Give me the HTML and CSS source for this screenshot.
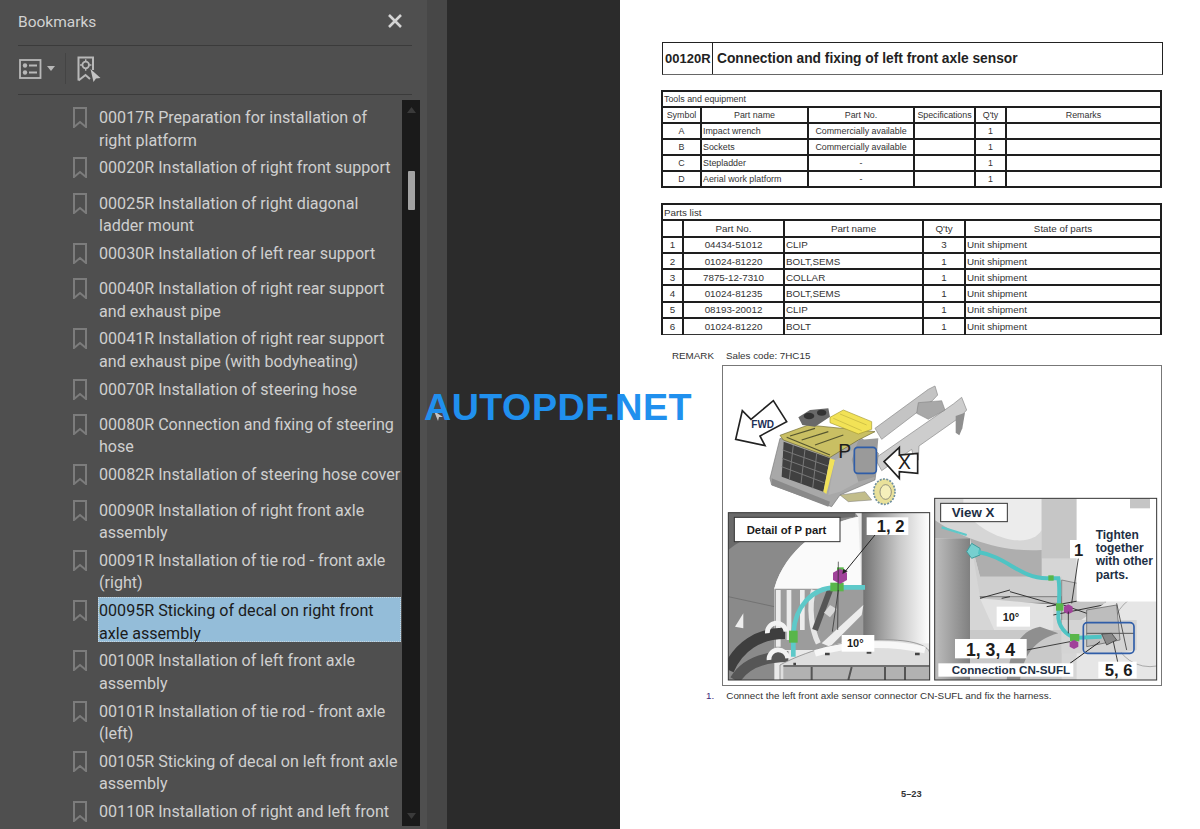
FILE: index.html
```html
<!DOCTYPE html>
<html lang="en">
<head>
<meta charset="utf-8">
<title>Bookmarks</title>
<link rel="stylesheet" href="styles.css">
</head>
<body>
<div class="app">
  <aside class="sidebar">
    <header class="side-head">
      <span class="side-title">Bookmarks</span>
      <svg class="close" width="16" height="16" viewBox="0 0 16 16"><path d="M2 2 14 14M14 2 2 14" stroke="#d4d4d4" stroke-width="2.6" fill="none"/></svg>
    </header>
    <div class="side-tools">
      <svg width="23" height="20" viewBox="0 0 23 20" fill="none" stroke="#b8b8b8">
        <rect x="1" y="1" width="20.500" height="18" stroke-width="1.800"/>
        <path d="M10 6.500h8M10 13.500h8" stroke-width="2.200"/>
        <circle cx="6" cy="6.500" r="2.200" fill="#b8b8b8" stroke="none"/>
        <circle cx="6" cy="13.500" r="2.200" fill="#b8b8b8" stroke="none"/>
      </svg>
      <svg class="caret" width="8" height="5" viewBox="0 0 8 5"><path d="M0 0h8L4 5z" fill="#b8b8b8"/></svg>
      <span class="tool-sep"></span>
      <svg width="24" height="26" viewBox="0 0 24 26" fill="none" stroke="#b8b8b8">
        <path d="M1.500 24.500V1.500h14.500V14M1.500 24.500l7-5.500 4.500 4" stroke-width="2"/>
        <circle cx="8.700" cy="9" r="3.300" stroke-width="1.800"/>
        <path d="M8.700 3.300v2M8.700 12.700v2M3 9h2M12.400 9h2" stroke-width="1.400"/>
        <path d="M13.500 13 23.500 22l-4.500 .500L16.500 26z" fill="#c4c4c4" stroke="none"/>
      </svg>
    </div>
    <div class="side-body">
      <ul class="tree">
        <li class="item"><svg class="mark" viewBox="0 0 14 21"><path d="M1 1h12v19l-6-5-6 5z"/></svg><span class="label">00017R Preparation for installation of right platform</span></li>
        <li class="item"><svg class="mark" viewBox="0 0 14 21"><path d="M1 1h12v19l-6-5-6 5z"/></svg><span class="label">00020R Installation of right front support</span></li>
        <li class="item"><svg class="mark" viewBox="0 0 14 21"><path d="M1 1h12v19l-6-5-6 5z"/></svg><span class="label">00025R Installation of right diagonal ladder mount</span></li>
        <li class="item"><svg class="mark" viewBox="0 0 14 21"><path d="M1 1h12v19l-6-5-6 5z"/></svg><span class="label">00030R Installation of left rear support</span></li>
        <li class="item"><svg class="mark" viewBox="0 0 14 21"><path d="M1 1h12v19l-6-5-6 5z"/></svg><span class="label">00040R Installation of right rear support and exhaust pipe</span></li>
        <li class="item"><svg class="mark" viewBox="0 0 14 21"><path d="M1 1h12v19l-6-5-6 5z"/></svg><span class="label">00041R Installation of right rear support and exhaust pipe (with bodyheating)</span></li>
        <li class="item"><svg class="mark" viewBox="0 0 14 21"><path d="M1 1h12v19l-6-5-6 5z"/></svg><span class="label">00070R Installation of steering hose</span></li>
        <li class="item"><svg class="mark" viewBox="0 0 14 21"><path d="M1 1h12v19l-6-5-6 5z"/></svg><span class="label">00080R Connection and fixing of steering hose</span></li>
        <li class="item"><svg class="mark" viewBox="0 0 14 21"><path d="M1 1h12v19l-6-5-6 5z"/></svg><span class="label">00082R Installation of steering hose cover</span></li>
        <li class="item"><svg class="mark" viewBox="0 0 14 21"><path d="M1 1h12v19l-6-5-6 5z"/></svg><span class="label">00090R Installation of right front axle assembly</span></li>
        <li class="item"><svg class="mark" viewBox="0 0 14 21"><path d="M1 1h12v19l-6-5-6 5z"/></svg><span class="label">00091R Installation of tie rod - front axle (right)</span></li>
        <li class="item"><svg class="mark" viewBox="0 0 14 21"><path d="M1 1h12v19l-6-5-6 5z"/></svg><span class="label selected">00095R Sticking of decal on right front axle assembly</span></li>
        <li class="item"><svg class="mark" viewBox="0 0 14 21"><path d="M1 1h12v19l-6-5-6 5z"/></svg><span class="label">00100R Installation of left front axle assembly</span></li>
        <li class="item"><svg class="mark" viewBox="0 0 14 21"><path d="M1 1h12v19l-6-5-6 5z"/></svg><span class="label">00101R Installation of tie rod - front axle (left)</span></li>
        <li class="item"><svg class="mark" viewBox="0 0 14 21"><path d="M1 1h12v19l-6-5-6 5z"/></svg><span class="label">00105R Sticking of decal on left front axle assembly</span></li>
        <li class="item"><svg class="mark" viewBox="0 0 14 21"><path d="M1 1h12v19l-6-5-6 5z"/></svg><span class="label">00110R Installation of right and left front</span></li>
      </ul>
      <div class="scrollbar">
        <svg class="arrow" width="9" height="6" viewBox="0 0 9 6"><path d="M0 6h9L4.500 0z" fill="#3a3a3a"/></svg>
        <span class="thumb"></span>
        <svg class="arrow arrow-end" width="9" height="6" viewBox="0 0 9 6"><path d="M0 0h9L4.500 6z" fill="#3a3a3a"/></svg>
      </div>
    </div>
  </aside>
  <div class="gutter"></div>
  <div class="backdrop"></div>
  <main class="page">
    <div class="title-box">
      <span class="title-code">00120R</span>
      <span class="title-text">Connection and fixing of left front axle sensor</span>
    </div>

    <table class="sheet tools">
      <colgroup><col class="t1"><col class="t2"><col class="t3"><col class="t4"><col class="t5"><col></colgroup>
      <tr><td colspan="6" class="l">Tools and equipment</td></tr>
      <tr><td>Symbol</td><td>Part name</td><td>Part No.</td><td class="tight">Specifications</td><td>Q'ty</td><td>Remarks</td></tr>
      <tr><td>A</td><td class="l">Impact wrench</td><td>Commercially available</td><td></td><td>1</td><td></td></tr>
      <tr><td>B</td><td class="l">Sockets</td><td>Commercially available</td><td></td><td>1</td><td></td></tr>
      <tr><td>C</td><td class="l">Stepladder</td><td>-</td><td></td><td>1</td><td></td></tr>
      <tr><td>D</td><td class="l">Aerial work platform</td><td>-</td><td></td><td>1</td><td></td></tr>
    </table>

    <table class="sheet parts">
      <colgroup><col class="p1"><col class="p2"><col class="p3"><col class="p4"><col></colgroup>
      <tr><td colspan="5" class="l">Parts list</td></tr>
      <tr><td></td><td>Part No.</td><td>Part name</td><td>Q'ty</td><td>State of parts</td></tr>
      <tr><td>1</td><td>04434-51012</td><td class="l">CLIP</td><td>3</td><td class="l">Unit shipment</td></tr>
      <tr><td>2</td><td>01024-81220</td><td class="l">BOLT,SEMS</td><td>1</td><td class="l">Unit shipment</td></tr>
      <tr><td>3</td><td>7875-12-7310</td><td class="l">COLLAR</td><td>1</td><td class="l">Unit shipment</td></tr>
      <tr><td>4</td><td>01024-81235</td><td class="l">BOLT,SEMS</td><td>1</td><td class="l">Unit shipment</td></tr>
      <tr><td>5</td><td>08193-20012</td><td class="l">CLIP</td><td>1</td><td class="l">Unit shipment</td></tr>
      <tr><td>6</td><td>01024-81220</td><td class="l">BOLT</td><td>1</td><td class="l">Unit shipment</td></tr>
    </table>

    <p class="remark"><span>REMARK</span><span>Sales code: 7HC15</span></p>

    <figure class="figure">
      <svg class="art" viewBox="722 365 440 321" width="440" height="321">
        <defs>
          <linearGradient id="col" x1="0" x2="1" y1="0" y2="0"><stop offset="0" stop-color="#6f6f6f"/><stop offset=".55" stop-color="#c9c9c9"/><stop offset="1" stop-color="#fff"/></linearGradient>
          <linearGradient id="col2" x1="0" x2="1" y1="0" y2="0"><stop offset="0" stop-color="#bdbdbd"/><stop offset="1" stop-color="#808080"/></linearGradient>
          <clipPath id="clipP"><rect x="40" y="68" width="604" height="502"/></clipPath>
          <clipPath id="clipX"><rect x="14" y="25" width="666" height="545"/></clipPath>
        </defs>

        <!-- machine overview -->
        <g transform="translate(715 360) scale(.33333)">
          <path d="M480 205 640 88 660 78 668 105 652 122 500 238z" fill="#c4c4c4" stroke="#8a8a8a" stroke-width="2"/>
          <path d="M480 295 715 132 740 112 755 150 735 172 720 182 612 258 610 300 598 300 590 268 500 332z" fill="#cdcdcd" stroke="#8a8a8a" stroke-width="2"/>
          <path d="M610 128 680 122 690 150 640 178 605 160z" fill="#a8a8a8" stroke="#777" stroke-width="1.500"/>
          <path d="M722 168 750 158 742 205 733 226 722 218z" fill="#8f8f8f"/>
          <path d="M195 235 165 355 170 375 350 440 375 405 480 360 490 280 440 235 360 270z" fill="#a8a8a8" stroke="#7a7a7a" stroke-width="2"/>
          <path d="M170 355 345 425 340 440 170 375z" fill="#8a8a8a"/>
          <path d="M206 245 345 295 325 395 200 350z" fill="#404040"/>
          <path d="M203 270 338 318M201 295 333 343M200 320 328 368M235 255 223 358M270 268 258 371M305 282 293 385" stroke="#777" stroke-width="3" fill="none"/>
          <path d="M345 295 360 300 334 402 325 395z" fill="#f1e25a"/>
          <path d="M360 300 430 260 480 290 470 345 375 395 340 405z" fill="#b2b2b2"/>
          <path d="M195 226 280 195 480 215 430 240 345 292 205 240z" fill="#c9bf63" stroke="#6f6a30" stroke-width="2"/>
          <path d="M225 228 300 205M260 240 340 215M300 255 385 225M215 232 345 285" stroke="#55552f" stroke-width="3.500" fill="none"/>
          <path d="M345 172 385 150 470 185 470 208 430 222 345 188z" fill="#f2e256" stroke="#a69a34" stroke-width="2"/>
          <path d="M355 175 440 212M375 162 455 195" stroke="#bfb240" stroke-width="2" fill="none"/>
          <path d="M250 172 285 150 340 145 345 170 300 200 262 195z" fill="#696969"/>
          <ellipse cx="282" cy="168" rx="16" ry="10" fill="#333"/>
          <ellipse cx="320" cy="158" rx="14" ry="9" fill="#333"/>
          <path d="M430 240 490 235 480 350 430 365 410 300z" fill="#9a9a9a"/>
          <path d="M375 405 450 395 470 420 400 425z" fill="#c2bd8b" stroke="#777" stroke-width="1.500"/>
          <ellipse cx="508" cy="395" rx="32" ry="38" fill="#e9e19a" stroke="#6f8f9f" stroke-width="5" stroke-dasharray="6 4"/>
          <ellipse cx="512" cy="396" rx="17" ry="22" fill="#f5efba" stroke="#666" stroke-width="2"/>
          <path d="M175 122 215 185 135 228 150 257 62 238 82 152 108 178z" fill="#fff" stroke="#222" stroke-width="5"/>
          <text x="143" y="204" class="t-fwd" text-anchor="middle">FWD</text>
          <text x="370" y="295" class="t-p">P</text>
          <rect x="418" y="262" width="66" height="78" rx="10" fill="none" stroke="#2f5da8" stroke-width="5"/>
          <path d="M507 305 553 262 553 285 608 280 608 340 553 335 553 355z" fill="#fff" stroke="#222" stroke-width="5"/>
          <text x="568" y="328" class="t-x" text-anchor="middle">X</text>
        </g>

        <!-- Detail of P part -->
        <g transform="translate(715 490) scale(.33333)">
          <g clip-path="url(#clipP)">
            <rect x="40" y="68" width="604" height="502" fill="#e9e9e9"/>
            <path d="M40 68H420L430 80C320 100 210 180 178 295V570H40z" fill="#8a8a8a"/>
            <path d="M40 68H420V80C300 90 120 110 40 180z" fill="#6a6a6a"/>
            <path d="M40 320 178 350" stroke="#666" stroke-width="2" fill="none"/>
            <path d="M60 410 85 370 85 415z" fill="#eee"/>
            <path d="M178 295C210 180 320 100 430 80L445 440H178z" fill="#fafafa"/>
            <rect x="440" y="68" width="204" height="392" fill="url(#col)"/>
            <path d="M178 296H445V440L300 480H178z" fill="#9c9c9c"/>
            <path d="M190 300V470M222 300V450M262 300V420" stroke="#ececec" stroke-width="14" fill="none"/>
            <path d="M296 300C280 350 290 420 310 460" stroke="#e6e6e6" stroke-width="16" fill="none"/>
            <path d="M320 460 445 345 440 375 345 470z" fill="#ededed"/>
            <path d="M345 300 300 420" stroke="#555" stroke-width="18" fill="none"/>
            <path d="M345 345 365 357 345 382 327 368z" fill="#d8d8d8"/>
            <path d="M40 540C70 470 130 430 210 430" stroke="#3e3e3e" stroke-width="34" fill="none"/>
            <path d="M60 570C90 520 150 500 220 500" stroke="#565656" stroke-width="32" fill="none"/>
            <path d="M157 430A28 28 0 0 1 213 425" stroke="#f3f3f3" stroke-width="14" fill="none"/>
            <path d="M162 510A28 28 0 0 1 218 505" stroke="#f3f3f3" stroke-width="14" fill="none"/>
            <path d="M195 525C260 490 380 445 520 450 600 450 644 470 644 490V570H195z" fill="#dedede" stroke="#777" stroke-width="2"/>
            <path d="M300 490C400 460 520 455 630 480" stroke="#f7f7f7" stroke-width="20" fill="none"/>
            <path d="M205 528H644" stroke="#4c4c4c" stroke-width="4" fill="none"/>
            <path d="M205 531H644V570H205z" fill="#b2b2b2"/>
            <path d="M235 522h8M330 492h14M455 488h14M600 492h14" stroke="#444" stroke-width="7" fill="none"/>
            <path d="M290 531v39M410 531 400 570M510 531v39M570 531v39" stroke="#555" stroke-width="6" fill="none"/>
            <path d="M235 500V430C240 350 290 295 360 292H450" stroke="#5ec9c9" stroke-width="14" fill="none"/>
            <rect x="222" y="422" width="26" height="36" fill="#59b64a"/>
            <rect x="346" y="278" width="40" height="26" fill="#59b64a"/>
            <rect x="366" y="232" width="20" height="14" fill="#59b64a"/>
            <path d="M375 236 396 248V270L375 282 354 270V248z" fill="#a0429a"/>
            <path d="M370 215 368 420" stroke="#222" stroke-width="2" fill="none"/>
            <path d="M370 300 352 425" stroke="#222" stroke-width="2" fill="none"/>
            <path d="M480 135 390 245" stroke="#222" stroke-width="3" fill="none"/>
            <path d="M382 252 385 236 398 244z" fill="#222"/>
          </g>
          <rect x="40" y="68" width="604" height="502" fill="none" stroke="#333" stroke-width="3"/>
          <rect x="58" y="82" width="317" height="73" fill="#fff" stroke="#333" stroke-width="3"/>
          <text x="95" y="133" class="t-label">Detail of P part</text>
          <rect x="455" y="82" width="125" height="53" fill="#fff"/>
          <text x="485" y="127" class="t-big">1, 2</text>
          <rect x="380" y="435" width="98" height="50" fill="#fff"/>
          <text x="396" y="472" class="t-deg">10°</text>
        </g>

        <!-- View X -->
        <g transform="translate(930 490) scale(.33333)">
          <g clip-path="url(#clipX)">
            <rect x="14" y="25" width="666" height="545" fill="#d6d6d6"/>
            <path d="M100 25H335V120C300 180 170 150 100 60z" fill="#ececec"/>
            <rect x="335" y="25" width="105" height="180" fill="#c6c6c6"/>
            <path d="M14 90C70 130 200 190 335 180V260H150L120 145H14z" fill="#aeaeae"/>
            <rect x="14" y="145" width="106" height="425" fill="url(#col2)"/>
            <path d="M35 112 110 135" stroke="#5ec9c9" stroke-width="7" fill="none"/>
            <path d="M120 145 150 320H395V260H150z" fill="#cfcfcf"/>
            <path d="M150 320H395V340H170z" fill="#c4c4c4" stroke="#555" stroke-width="2"/>
            <path d="M150 325 195 425H370V345z" fill="#e2e2e2"/>
            <path d="M120 420H395V570H120z" fill="#c9c9c9"/>
            <path d="M330 410C270 420 240 480 230 570H270C280 500 310 450 385 430z" fill="#8f8f8f"/>
            <path d="M395 270 490 290 530 340V400H395z" fill="#c4c4c4" stroke="#666" stroke-width="2"/>
            <path d="M350 350 460 330M370 375 520 345M400 345 540 395" stroke="#333" stroke-width="3" fill="none"/>
            <path d="M530 335H680V570H440V400z" fill="#e6e6e6"/>
            <circle cx="660" cy="420" r="110" fill="none" stroke="#aaa" stroke-width="3"/>
            <path d="M395 390H620V480L560 490H395z" fill="#d4d4d4"/>
            <path d="M470 360 560 345 570 450 470 470z" fill="#bdbdbd" stroke="#555" stroke-width="2"/>
            <path d="M470 430H612M560 340 590 480" stroke="#555" stroke-width="3" fill="none"/>
            <path d="M240 320 215 325M240 300 150 325M240 305 380 345" stroke="#333" stroke-width="3" fill="none"/>
            <rect x="440" y="25" width="240" height="310" fill="#fff"/>
            <rect x="600" y="25" width="60" height="30" fill="#c5c5c5"/>
            <path d="M125 160 110 185 125 205 150 195 150 175z" fill="#76cfcf" stroke="#3f9b9b" stroke-width="3"/>
            <path d="M145 186C230 200 270 265 350 265H385C392 300 385 350 385 385 390 420 420 445 445 443L515 440" stroke="#4fc4c4" stroke-width="12" fill="none"/>
            <rect x="355" y="256" width="16" height="16" fill="#59b64a"/>
            <rect x="378" y="340" width="22" height="22" fill="#59b64a"/>
            <rect x="420" y="432" width="28" height="22" fill="#59b64a"/>
            <path d="M415 343 428 350V366L415 373 402 366V350z" fill="#a0429a"/>
            <path d="M432 450 445 457V470L432 477 419 470V457z" fill="#a0429a"/>
            <path d="M515 432 545 430 560 450 530 465z" fill="#888" stroke="#333" stroke-width="2"/>
            <path d="M445 205 425 340M415 365V430" stroke="#222" stroke-width="2.500" fill="none"/>
            <path d="M290 480 420 455" stroke="#222" stroke-width="2.500" fill="none"/>
            <path d="M420 520 510 455" stroke="#222" stroke-width="3" fill="none"/>
            <path d="M565 525 550 455" stroke="#222" stroke-width="2.500" fill="none"/>
            <rect x="460" y="398" width="152" height="92" rx="12" fill="none" stroke="#2f5da8" stroke-width="5"/>
          </g>
          <rect x="14" y="25" width="666" height="545" fill="none" stroke="#333" stroke-width="3"/>
          <rect x="32" y="40" width="200" height="55" fill="#fff" stroke="#333" stroke-width="3"/>
          <text x="65" y="82" class="t-view">View X</text>
          <text class="t-note"><tspan x="497" y="146">Tighten</tspan><tspan x="497" y="186">together</tspan><tspan x="497" y="226">with other</tspan><tspan x="497" y="267">parts.</tspan></text>
          <rect x="420" y="150" width="50" height="55" fill="#fff"/>
          <text x="432" y="197" class="t-big">1</text>
          <rect x="200" y="350" width="100" height="60" fill="#fff"/>
          <text x="218" y="392" class="t-deg">10°</text>
          <rect x="75" y="447" width="215" height="58" fill="#fff"/>
          <text x="108" y="497" class="t-big wide">1, 3, 4</text>
          <rect x="25" y="520" width="405" height="40" fill="#fff"/>
          <text x="65" y="551" class="t-conn">Connection CN-SUFL</text>
          <rect x="505" y="515" width="115" height="50" fill="#fff"/>
          <text x="524" y="559" class="t-big">5, 6</text>
        </g>
      </svg>
    </figure>

    <p class="caption"><span class="cap-num">1.</span><span>Connect the left front axle sensor connector CN-SUFL and fix the harness.</span></p>
    <p class="folio">5–23</p>
  </main>
  <svg class="pointer" width="9" height="10" viewBox="0 0 9 10"><path d="M0 0 9 6 5 6 4 10z" fill="#c4c4c4"/></svg>
  <div class="watermark">AUTOPDF.NET</div>
</div>
</body>
</html>
```
FILE: styles.css
```css
* { box-sizing: border-box; }
html, body { margin: 0; height: 100%; overflow: hidden; }
body { font-family: Roboto, "Open Sans", sans-serif; background: #2b2b2b; }
.app { position: relative; display: flex; height: 829px; width: 1200px; overflow: hidden; }

/* sidebar */
.sidebar { width: 427px; flex: none; background: #4f4f4f; padding: 0 15px 0 18px; display: flex; flex-direction: column; }
.side-head { height: 46px; display: flex; align-items: center; justify-content: space-between; padding: 0 9px 3px 0; border-bottom: 1px solid #3b3b3b; }
.side-title { font-size: 15.500px; color: #d2d2d2; padding-top: 2px; }
.side-tools { height: 49px; display: flex; align-items: center; border-bottom: 1px solid #3b3b3b; padding: 0 0 3px 1px; }
.caret { margin-left: 5px; }
.tool-sep { width: 1px; height: 31px; background: #444; margin: 0 11px 0 10px; }
.side-body { flex: 1; min-height: 0; display: flex; padding-top: 5px; margin-right: -8px; }
.tree { list-style: none; margin: 0; padding: 6px 0 0 55px; flex: 1; min-width: 0; overflow: hidden; }
.item { display: flex; align-items: flex-start; gap: 11px; min-height: 30px; margin-bottom: 5.290px; }
.mark { width: 14px; height: 21px; flex: none; margin-top: 1px; fill: none; stroke: #7c7c7c; stroke-width: 2; }
.label { font-size: 16.100px; line-height: 22.500px; color: #cfcfcf; width: 303px; padding: 1px 0 0 1px; margin-bottom: -1px; }
.selected { background: #94bdd9; color: #1b1b1b; outline: 1px dotted #c9d6df; outline-offset: -1px; height: 45px; padding-top: 3px; margin: -2px 0 2px; }
.scrollbar { width: 18px; flex: none; margin-bottom: 3px; background: #1a1a1a; display: flex; flex-direction: column; align-items: center; padding: 7px 0; position: relative; }
.thumb { width: 7px; height: 39px; background: #a3a3a3; border-radius: 1px; margin-top: 58px; }
.arrow-end { margin-top: auto; }

.gutter { width: 20px; flex: none; background: #474747; }
.backdrop { width: 173px; flex: none; background: #2b2b2b; }

/* page */
.page { flex: 1; background: #fff; color: #222; font-family: "Liberation Sans", Arial, sans-serif; padding: 42px 38px 0 42px; }
.title-box { width: 501px; height: 33px; border: 1px solid #222; border-bottom-color: #666; display: flex; align-items: center; font-weight: 700; }
.title-code { width: 50px; height: 100%; flex: none; border-right: 1px solid #222; font-size: 13px; padding-left: 2px; line-height: 31px; }
.title-text { font-size: 13.780px; padding-left: 4px; }
.sheet { border-collapse: collapse; table-layout: fixed; width: 501px; margin-left: -1px; font-size: 8.900px; color: #333; }
.sheet td { border: 2px solid #1e1e1e; padding: 0 1px; text-align: center; overflow: hidden; white-space: nowrap; }
.sheet .l { text-align: left; }
.sheet .tight { padding: 0; letter-spacing: -.05px; }
.tools { margin-top: 15px; }
.tools tr { height: 16px; }
.t1 { width: 39px; } .t2 { width: 107px; } .t3 { width: 106px; } .t4 { width: 61px; } .t5 { width: 31px; }
.tools td:nth-child(4) { border-left-width: 1px; border-right-width: 1px; border-left-color: #666; border-right-color: #666; }
.parts { margin-top: 15px; font-size: 9.800px; }
.parts tr { height: 16.300px; }
.parts tr:last-child td { border-bottom: 1px solid #333; }
.p1 { width: 21px; } .p2 { width: 101px; } .p3 { width: 139px; } .p4 { width: 42px; }
.remark { margin: 15px 0 0 10px; font-size: 9.800px; display: flex; gap: 12px; line-height: 11px; color: #333; }
.figure { margin: 4px 0 0 60px; width: 440px; height: 321px; border: 1px solid #777; position: relative; overflow: hidden; }
.art { display: block; margin: -1px; }
.caption { margin: 4px 0 0 44px; font-size: 9.900px; line-height: 11px; display: flex; gap: 12px; color: #333; }
.cap-num { color: #3f2a7a; }
.folio { margin: 88px 0 0 239px; font-size: 9.300px; line-height: 11px; font-weight: 700; color: #333; }

/* figure text */
.art text { font-family: "Liberation Sans", Arial, sans-serif; fill: #1c1c1c; }
.art .t-fwd { font-size: 30px; font-weight: 700; fill: #1d2f55; }
.art .t-p { font-size: 58px; }
.art .t-x { font-size: 58px; }
.art .t-label { font-size: 34px; font-weight: 700; }
.art .t-big { font-size: 50px; font-weight: 700; }
.art .wide { font-size: 53px; }
.art .t-deg { font-size: 33px; font-weight: 700; }
.art .t-view { font-size: 40px; font-weight: 700; fill: #1d2f45; }
.art .t-note { font-size: 36px; font-weight: 700; fill: #1d2f45; }
.art .t-conn { font-size: 35px; font-weight: 700; fill: #1d2f45; }

/* overlays */
.pointer { position: absolute; left: 434px; top: 411px; }
.watermark { position: absolute; left: 424px; top: 385px; font-family: "Liberation Sans", Arial, sans-serif; font-weight: 700; font-size: 37.700px; line-height: 44px; letter-spacing: .45px; color: #2090ee; }
```
